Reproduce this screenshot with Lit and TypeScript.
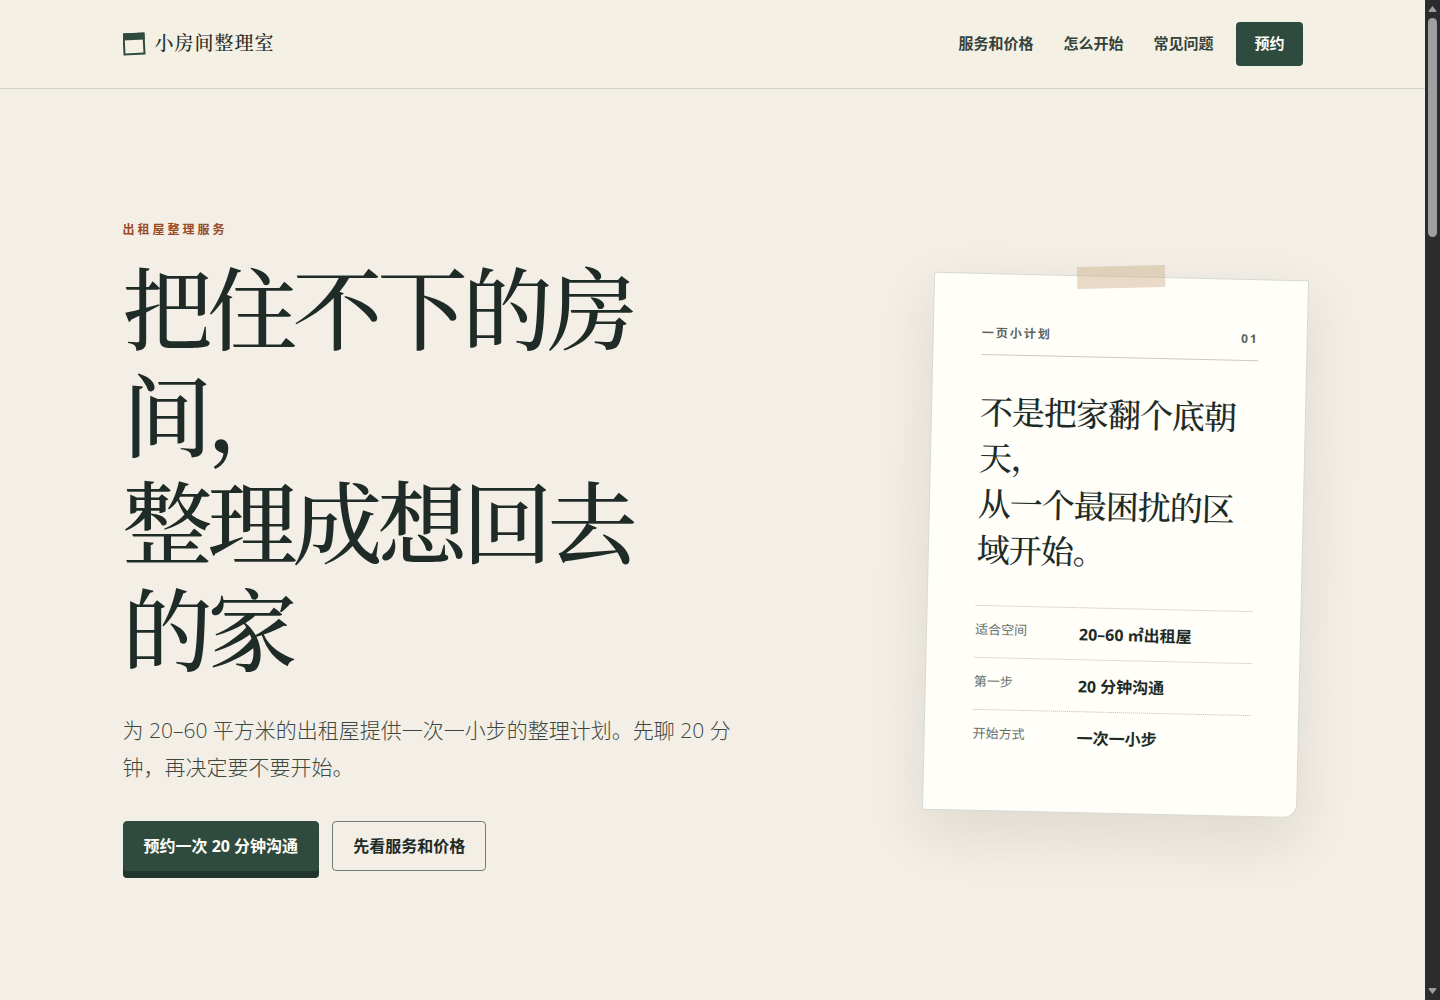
import { LitElement, html, css } from "lit";
import { customElement } from "lit/decorators.js";

const rows = [
  ["适合空间", "20–60 ㎡出租屋"],
  ["第一步", "20 分钟沟通"],
  ["开始方式", "一次一小步"],
];

@customElement("app-root")
export class AppRoot extends LitElement {
  static styles = css`
    :host {
      --ink: #1e2b26;
      --muted: #3b4841;
      --green: #2f4a3e;
      --serif: "Liberation Serif", "Noto Serif CJK SC", "Noto Sans CJK SC", serif;
      display: grid;
      grid-template-columns: minmax(0, 1fr) 15px;
      height: 100vh;
      overflow: hidden;
      color: var(--ink);
      background: #f3eee6;
      font-family: "Open Sans", "Noto Sans CJK SC", sans-serif;
      font-size: 16px;
    }
    * { box-sizing: border-box; margin: 0; }
    a { color: inherit; text-decoration: none; white-space: nowrap; }
    .page { display: flex; flex-direction: column; min-height: 100vh; }
    .wrap { width: 100%; max-width: 1180px; margin: 0 auto; }
    .header { background: #f5f0e4; border-bottom: 1px solid #d0d2c3; }
    .bar { display: flex; align-items: center; justify-content: space-between; height: 88px; }
    .brand { display: flex; align-items: center; gap: 9px; font: 500 19px/30px var(--serif); letter-spacing: 1px; }
    .nav { display: flex; align-items: center; gap: 30px; font-size: 15px; font-weight: 600; line-height: 20px; color: #35433c; }
    .link { padding-bottom: 2px; }
    .book {
      margin-left: -7px; padding: 0 18px 2px; border-radius: 4px;
      line-height: 42px; font-weight: 700; color: #fffef9; background: var(--green);
    }
    .hero { flex: 1; display: flex; align-items: center; justify-content: space-between; gap: 48px; }
    .copy { max-width: 616px; }
    .eyebrow { margin-bottom: 18px; font-size: 12px; line-height: 22px; font-weight: 700; letter-spacing: 3px; color: #984a24; }
    .title { max-width: 560px; font: 500 90px/107px var(--serif); letter-spacing: -5px; }
    .lead { margin-top: 25px; font-size: 21px; line-height: 37px; font-weight: 300; color: var(--muted); }
    .actions { display: flex; gap: 13px; margin-top: 35px; }
    .btn { padding: 0 20px; border: 1px solid #737d76; border-radius: 4px; line-height: 48px; font-weight: 600; }
    .primary { border-color: var(--green); color: #fffef9; background: var(--green); box-shadow: 0 7px 0 #20352c; font-weight: 700; }
    .card {
      position: relative; flex: none; width: 375px; padding: 48px 48px 49px;
      border: 1px solid #d6dad5; border-radius: 2px 2px 14px 2px; background: #fffef9;
      transform: rotate(1.3deg);
      box-shadow: 0 22px 54px rgba(83, 76, 42, 0.12);
    }
    .tape {
      position: absolute; top: -11px; left: 50%; width: 88px; height: 22px; margin-left: -45px;
      background: rgba(205, 176, 140, 0.46); transform: rotate(-2.6deg);
    }
    .top {
      display: flex; justify-content: space-between; padding-bottom: 10px; border-bottom: 1px solid #cfc9c0;
      font-size: 12px; line-height: 22px; font-weight: 700; letter-spacing: 2px; color: #5b645f;
    }
    .plan { margin: 35px 0 31px; font: 500 33px/46px var(--serif); letter-spacing: -1px; }
    .row { display: grid; grid-template-columns: 88px 1fr; gap: 16px; padding: 12px 0 10px; border-top: 1px dotted #bdb8b0; }
    .row dt { font-size: 13px; line-height: 22px; color: #66706a; }
    .row dd { font-weight: 700; line-height: 29px; }
    .track { display: flex; flex-direction: column; align-items: center; justify-content: space-between; height: 100vh; background: #2c2c2c; }
    .track svg { display: block; }
  `;

  render() {
    return html`
      <div class="page">
        <header class="header">
          <div class="wrap bar">
            <a class="brand" href="#">
              <svg width="23" height="24" viewBox="0 0 23 24" aria-hidden="true">
                <g transform="rotate(-3 11.5 12)">
                  <rect x="1" y="2" width="20" height="20" fill="none" stroke="#2f4a3e" stroke-width="2" />
                  <rect x="0" y="1" width="22" height="7" fill="#2f4a3e" />
                </g>
              </svg>
              小房间整理室
            </a>
            <nav class="nav">
              <a class="link" href="#services">服务和价格</a>
              <a class="link" href="#start">怎么开始</a>
              <a class="link" href="#faq">常见问题</a>
              <a class="book" href="#book">预约</a>
            </nav>
          </div>
        </header>
        <main class="wrap hero">
          <section class="copy">
            <p class="eyebrow">出租屋整理服务</p>
            <h1 class="title">把住不下的房间，<br />整理成想回去的家</h1>
            <p class="lead">为 20–60 平方米的出租屋提供一次一小步的整理计划。先聊 20 分钟，再决定要不要开始。</p>
            <div class="actions">
              <a class="btn primary" href="#book">预约一次 20 分钟沟通</a>
              <a class="btn" href="#services">先看服务和价格</a>
            </div>
          </section>
          <aside class="card">
            <span class="tape"></span>
            <div class="top"><span>一页小计划</span><span>01</span></div>
            <h2 class="plan">不是把家翻个底朝天，<br />从一个最困扰的区域开始。</h2>
            <dl>
              ${rows.map(([label, value]) => html`<div class="row"><dt>${label}</dt><dd>${value}</dd></div>`)}
            </dl>
          </aside>
        </main>
      </div>
      <div class="track" aria-hidden="true">
        <svg width="15" height="240" viewBox="0 0 15 240">
          <path d="M7.5 6L11.5 11Q11.5 12 10.5 12H4.5Q3.5 12 3.5 11Z" fill="#9f9f9f" />
          <rect x="3" y="18" width="9" height="219" rx="4.5" fill="#9f9f9f" />
        </svg>
        <svg width="15" height="15" viewBox="0 0 15 15">
          <path d="M7.5 9L11.5 4Q11.5 3 10.5 3H4.5Q3.5 3 3.5 4Z" fill="#9f9f9f" />
        </svg>
      </div>
    `;
  }
}
